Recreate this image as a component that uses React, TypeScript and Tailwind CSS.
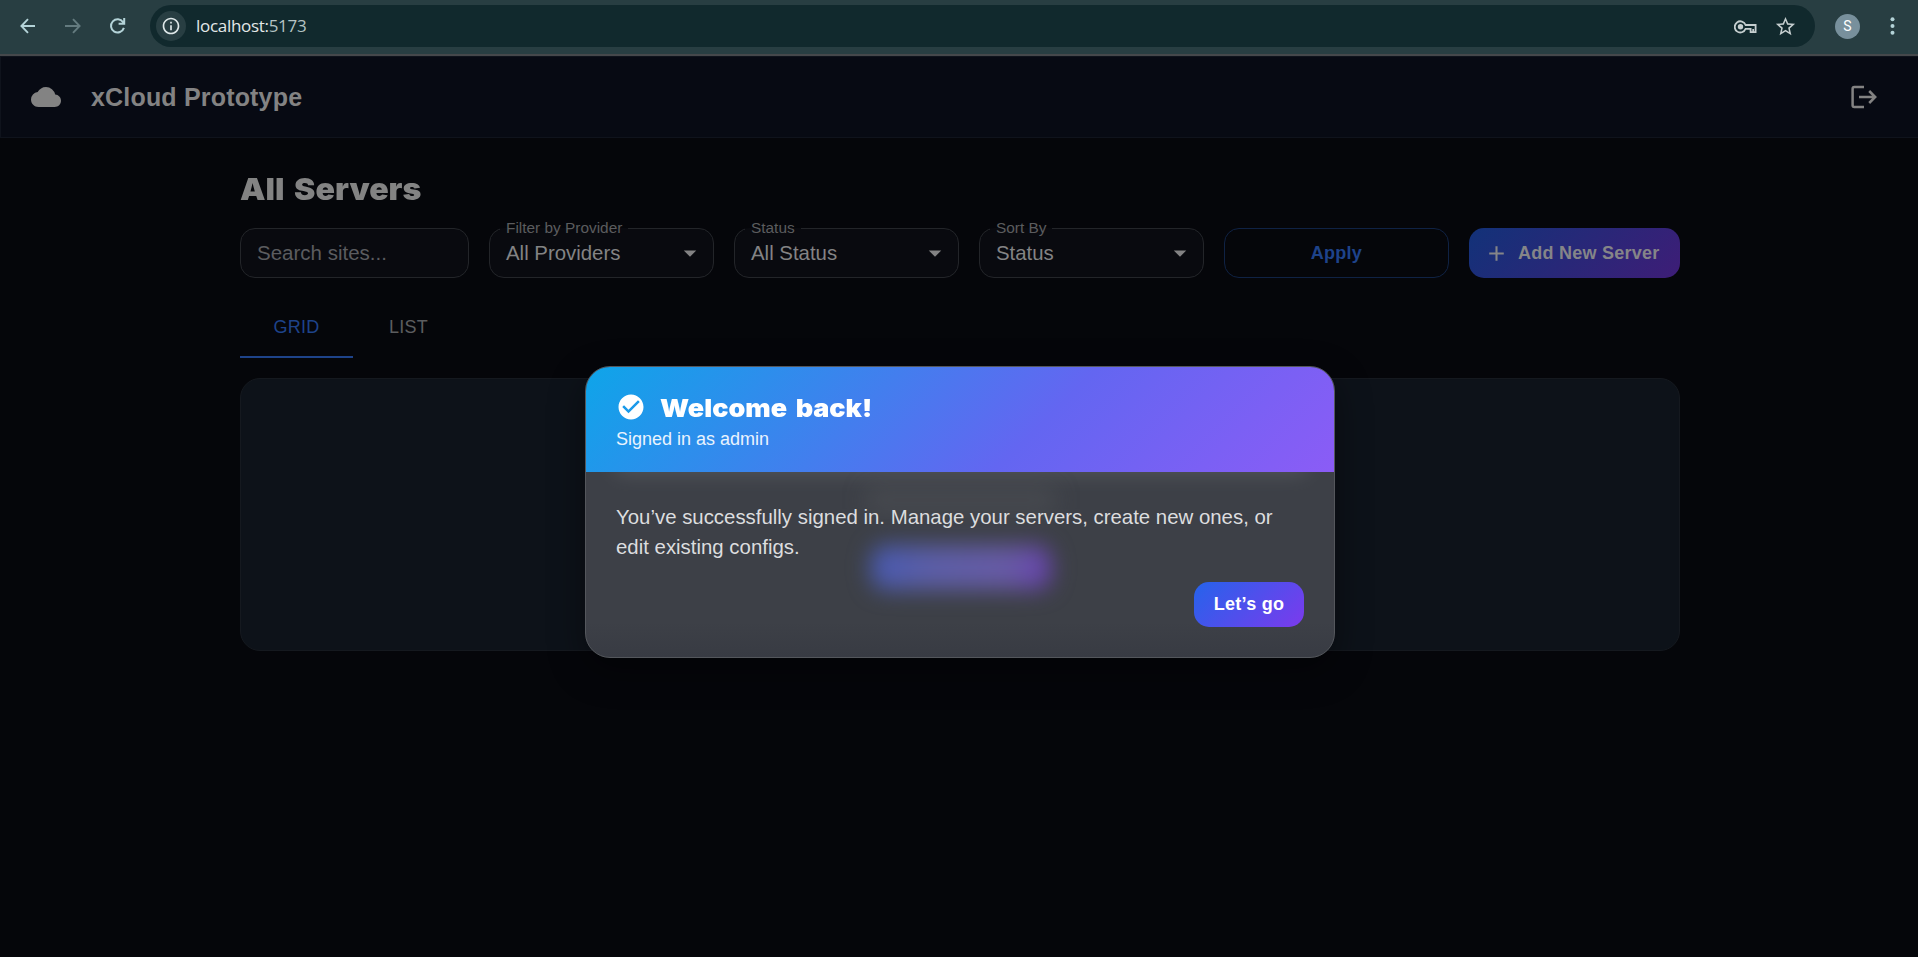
import React from "react";
import {
  MdInfoOutline,
  MdStarBorder,
  MdCloud,
  MdArrowDropDown,
  MdAdd,
  MdCheckCircle,
} from "react-icons/md";

function BrowserBar() {
  return (
    <div className="flex h-[56px] shrink-0 items-start border-b-2 border-[#45484b] bg-[#283e42] text-[#b4d3d8]">
      <div className="flex h-[52px] w-full items-center">
        <svg className="ml-[20px] size-[16px]" viewBox="0 0 16 16" fill="none" stroke="currentColor" strokeWidth="1.9">
          <path d="M15 8H1.6M8 1.2 1.4 8 8 14.8" />
        </svg>
        <svg className="ml-[29px] size-[16px] text-[#647b7f]" viewBox="0 0 16 16" fill="none" stroke="currentColor" strokeWidth="1.9">
          <path d="M0 8h14.4M8 1.2 14.6 8 8 14.8" />
        </svg>
        <svg className="ml-[28px] size-[18px]" viewBox="0 0 18 18" fill="none" stroke="currentColor" strokeWidth="2">
          <path d="M14.9 10.9A6.6 6.6 0 1 1 14.1 5.2L15 6.4M15.2 1v5.8H9.6" />
        </svg>
        <div className="ml-[23px] flex h-[42px] w-[1665px] items-center rounded-full bg-[#11292d] pl-[6px] pr-[18px]">
          <div className="flex size-[30px] items-center justify-center rounded-full bg-[#283e42] text-[#dfe8e9]">
            <MdInfoOutline className="size-[20px]" />
          </div>
          <div className="ml-[10px] flex-1 font-['Open_Sans','Noto_Sans',sans-serif] text-[17px] tracking-[-0.3px] text-[#e3e8e8]">
            localhost:<span className="text-[#b5c3c4]">5173</span>
          </div>
          <svg className="mt-[1px] h-[14px] w-[23px] text-[#c5cecf]" viewBox="0 0 23 14" fill="none" stroke="currentColor" strokeWidth="1.8">
            <path d="M11.6 5A5.6 5.6 0 1 0 11.6 8.8H16.6V12.2H21.6V5Z" />
            <circle cx="6.5" cy="6.8" r="2.7" fill="currentColor" stroke="none" />
            <path d="M19.2 9v3" />
          </svg>
          <MdStarBorder className="ml-[17px] size-[23px] text-[#c5cecf]" />
        </div>
        <div className="ml-[20px] flex size-[25px] items-center justify-center rounded-full bg-[#78909c] font-['Roboto',sans-serif] text-[14px] text-white">
          S
        </div>
        <svg className="ml-[30px] h-[18px] w-[5px]" viewBox="0 0 5 18" fill="currentColor">
          <circle cx="2.5" cy="2.2" r="2" />
          <circle cx="2.5" cy="9" r="2" />
          <circle cx="2.5" cy="15.8" r="2" />
        </svg>
      </div>
    </div>
  );
}

function SelectField({ label, value }: { label: string; value: string }) {
  return (
    <fieldset className="-mt-[9px] h-[59px] w-[225px] min-w-0 rounded-[15px] border border-[#232529] bg-[#090a0f] px-[10px]">
      <legend className="h-[18px] px-[6px] text-[15.4px] leading-[17px] text-[#5b5c5e]">{label}</legend>
      <div className="-mt-[1px] flex h-[34px] items-center justify-between pl-[6px] text-[20.4px] text-[#838384]">
        {value}
        <MdArrowDropDown className="-mr-[2px] size-[30px]" />
      </div>
    </fieldset>
  );
}

function Dialog() {
  return (
    <div className="absolute left-[585px] top-[366px] flex h-[292px] w-[750px] flex-col overflow-hidden rounded-[25px] border border-[#54575c] bg-[linear-gradient(180deg,#3d4047_0%,#3d4047_88%,#383b43_100%)]">
      <div className="flex h-[105px] shrink-0 flex-col bg-[linear-gradient(135deg,#0ea5e9_0%,#6366f1_60%,#8b5cf6_100%)] pl-[30px] pt-[24px] text-white">
        <div className="flex h-[32px] items-center">
          <MdCheckCircle className="size-[30px]" />
          <span className="ml-[14px] mt-[2px] origin-left scale-x-[1.078] font-['Inter',sans-serif] text-[25px] font-black leading-[32px] [word-spacing:3px]">
            Welcome back!
          </span>
        </div>
        <div className="mt-[1px] h-[28px] text-[18px] leading-[30px] text-[#e9f3fe]">Signed in as admin</div>
      </div>
      <div className="relative flex-1 overflow-hidden px-[30px] pt-[30px]">
        <div className="absolute left-[30px] top-[-20px] h-[22px] w-[690px] bg-[#6a6c70] opacity-50 blur-[10px]" />
        <div className="absolute left-[280px] top-[15px] h-[26px] w-[190px] bg-[#5c5e61] opacity-35 blur-[12px]" />
        <div className="absolute left-[285px] top-[73px] h-[45px] w-[180px] rounded-[15px] bg-[linear-gradient(100deg,#4659b0,#5c5ea6_35%,#675aa4_75%,#673fae)] blur-[11px]" />
        <p className="relative whitespace-nowrap text-[20.4px] leading-[30px] text-[#dcdddf]">
          You’ve successfully signed in. Manage your servers, create new ones, or
          <br />
          edit existing configs.
        </p>
        <div className="relative mt-[20px] flex justify-end">
          <button className="h-[45px] w-[110px] rounded-[15px] bg-[linear-gradient(135deg,#2563eb,#7c3aed)] text-[18px] font-bold tracking-[0.25px] text-white">
            Let’s go
          </button>
        </div>
      </div>
    </div>
  );
}

export default function App() {
  return (
    <div className="relative flex h-[957px] w-[1918px] flex-col overflow-hidden bg-[#05060a] font-['Liberation_Sans',Arial,sans-serif]">
      <BrowserBar />
      <header className="flex h-[82px] shrink-0 items-center border-y border-l border-[#0f131c] bg-[#070a13] pl-[30px] pr-[41px] text-[#838383]">
        <MdCloud className="size-[30px]" />
        <h1 className="ml-[30px] flex-1 text-[25px] font-bold leading-none tracking-[0.18px]">xCloud Prototype</h1>
        <svg className="h-[24px] w-[27px]" viewBox="0 0 27 24" fill="none" stroke="currentColor" strokeWidth="2.5">
          <path d="M14 2H4.3Q2.6 2 2.6 3.8V20.2Q2.6 22 4.3 22H14" />
          <path d="M9 12H25M19.2 6 25.2 12 19.2 18" />
        </svg>
      </header>
      <main className="ml-[240px] flex w-[1440px] flex-col">
        <h2 className="mt-[31px] h-[40px] origin-left scale-x-[1.07] font-['Inter',sans-serif] text-[30px] font-black leading-[40px] text-[#838383] [word-spacing:3px]">
          All Servers
        </h2>
        <div className="mt-[19px] flex h-[50px] items-start gap-[20px] font-normal">
          <div className="flex h-[50px] w-[229px] items-center rounded-[15px] border border-[#232529] bg-[#090a0f] pl-[16px] text-[20.5px] text-[#5b5c5f]">
            Search sites...
          </div>
          <SelectField label="Filter by Provider" value="All Providers" />
          <SelectField label="Status" value="All Status" />
          <SelectField label="Sort By" value="Status" />
          <button className="h-[50px] w-[225px] rounded-[15px] border border-[#0f2244] text-[18px] font-bold tracking-[0.25px] text-[#1e438a]">
            Apply
          </button>
          <button className="flex h-[50px] w-[211px] items-center rounded-[15px] bg-[linear-gradient(135deg,#123279,#3e1d77)] pl-[15px] text-[18px] font-bold tracking-[0.25px] text-[#858588]">
            <MdAdd className="size-[25px]" />
            <span className="ml-[9px] whitespace-nowrap">Add New Server</span>
          </button>
        </div>
        <div className="mt-[20px] flex h-[60px] text-[18px] tracking-[0.2px] text-[#5c5d5f]">
          <div className="flex w-[113px] items-center justify-center border-b-2 border-[#1e438a] text-[#1e438a]">GRID</div>
          <div className="flex w-[111px] items-center justify-center pb-[2px]">LIST</div>
        </div>
        <section className="mt-[20px] h-[273px] rounded-[20px] border border-[#15191f] bg-[#0d1219]" />
      </main>
      <div className="absolute left-[585px] top-[366px] h-[292px] w-[750px] rounded-[25px] shadow-[0_12px_36px_0_rgba(0,0,0,0.4)]" />
      <Dialog />
    </div>
  );
}
